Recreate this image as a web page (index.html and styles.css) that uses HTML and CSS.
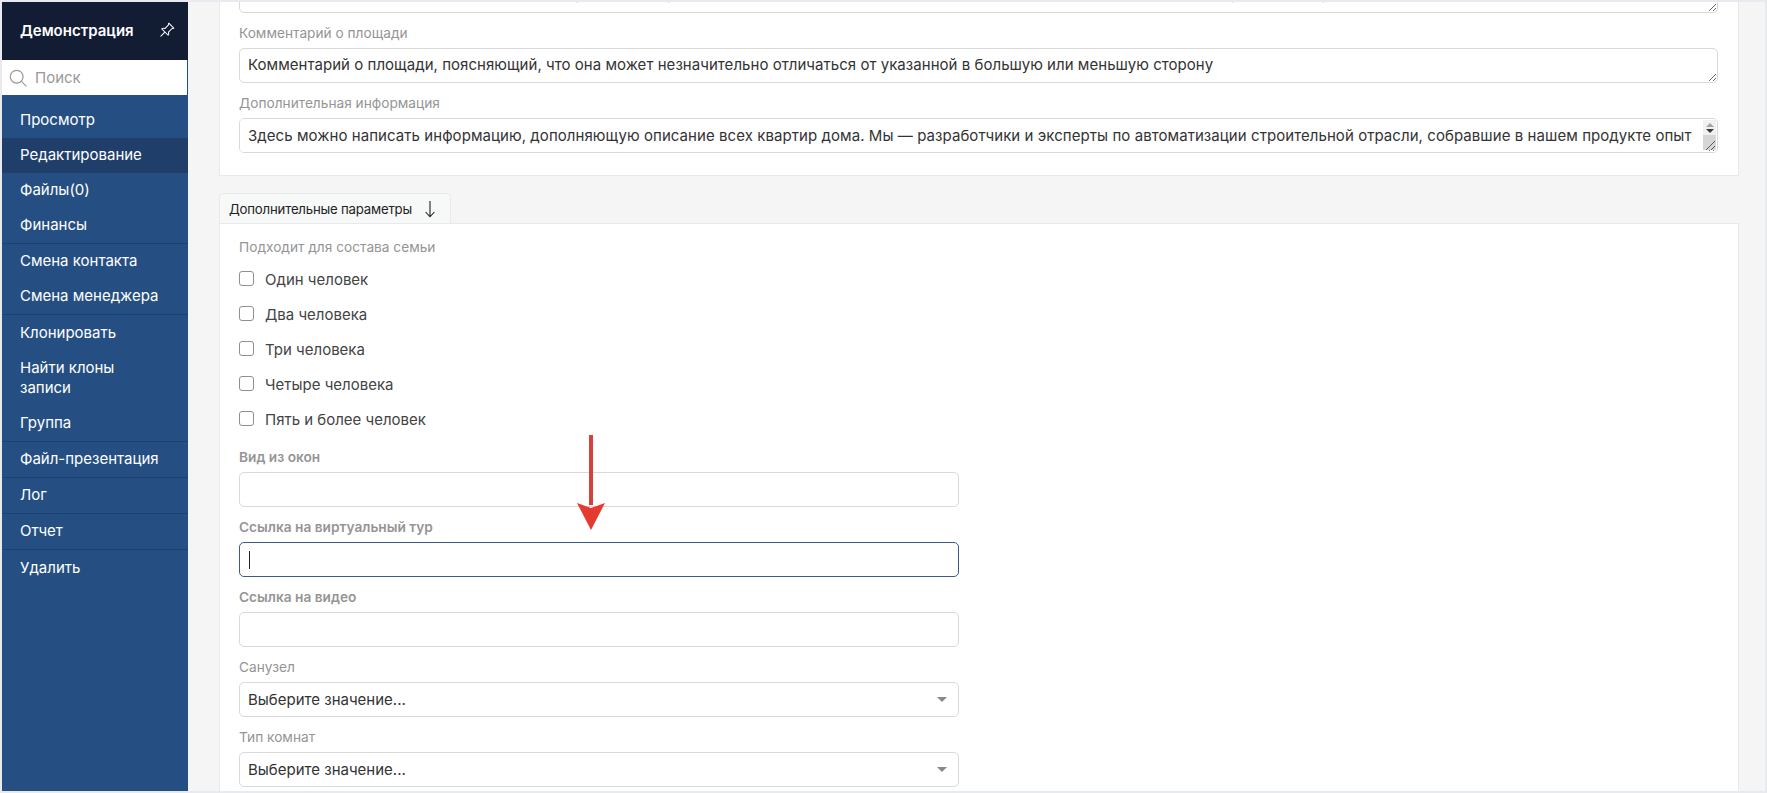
FILE: index.html
```html
<!DOCTYPE html>
<html lang="ru">
<head>
<meta charset="utf-8">
<title>Редактирование</title>
<link rel="stylesheet" href="styles.css">
</head>
<body>
<div class="app">
  <aside class="sidebar">
    <div class="brand">
      <span>Демонстрация</span>
      <svg class="pin" viewBox="0 0 16 16" width="16" height="16" fill="#fff"><path d="M9.828.722a.5.5 0 0 1 .354.146l4.95 4.95a.5.5 0 0 1 0 .707c-.48.48-1.072.588-1.503.588-.177 0-.335-.018-.46-.039l-3.134 3.134a5.927 5.927 0 0 1 .16 1.013c.046.702-.032 1.687-.72 2.375a.5.5 0 0 1-.707 0l-2.829-2.828-3.182 3.182c-.195.195-1.219.902-1.414.707-.195-.195.512-1.22.707-1.414l3.182-3.182-2.828-2.829a.5.5 0 0 1 0-.707c.688-.688 1.673-.767 2.375-.72a5.922 5.922 0 0 1 1.013.16l3.134-3.133a2.772 2.772 0 0 1-.04-.461c0-.43.108-1.022.589-1.503a.5.5 0 0 1 .353-.146zm.122 2.112v-.002.002zm0-.002v.002a.5.5 0 0 1-.122.51L6.293 6.878a.5.5 0 0 1-.511.12H5.78l-.014-.004a4.507 4.507 0 0 0-.288-.076 4.922 4.922 0 0 0-.765-.116c-.422-.028-.836.008-1.175.15l5.51 5.509c.141-.34.177-.753.149-1.175a4.924 4.924 0 0 0-.192-1.054l-.004-.013v-.001a.5.5 0 0 1 .12-.512l3.536-3.535a.5.5 0 0 1 .532-.115l.096.022c.087.017.208.034.344.034.114 0 .23-.011.343-.04L9.927 2.028c-.029.113-.04.23-.04.343a1.779 1.779 0 0 0 .062.46z"/></svg>
    </div>
    <div class="search">
      <svg viewBox="0 0 18 18" width="18" height="18" fill="none" stroke="#9a9a9a" stroke-width="1.2"><circle cx="7.7" cy="7.7" r="6.4"/><path d="M12.4 12.4l5 5"/></svg>
      <span>Поиск</span>
    </div>
    <nav class="nav">
      <a class="item">Просмотр</a>
      <a class="item active">Редактирование</a>
      <a class="item">Файлы(0)</a>
      <a class="item sep">Финансы</a>
      <a class="item">Смена контакта</a>
      <a class="item sep">Смена менеджера</a>
      <a class="item loose">Клонировать</a>
      <a class="item">Найти клоны записи</a>
      <a class="item sep">Группа</a>
      <a class="item sep">Файл-презентация</a>
      <a class="item sep">Лог</a>
      <a class="item sep">Отчет</a>
      <a class="item loose">Удалить</a>
    </nav>
  </aside>
  <main class="main">
    <section class="card card-top">
      <textarea class="area area-cut" readonly>Комментарий о цене, поясняющий, что она указана без учета отделки, и может незначительно меняться, а также дополнительные условия покупки квартиры</textarea>
      <div class="field">
        <label class="label">Комментарий о площади</label>
        <textarea class="area" readonly>Комментарий о площади, поясняющий, что она может незначительно отличаться от указанной в большую или меньшую сторону</textarea>
      </div>
      <div class="field">
        <label class="label">Дополнительная информация</label>
        <div class="scroll-wrap">
          <textarea class="area area-long" readonly>Здесь можно написать информацию, дополняющую описание всех квартир дома. Мы — разработчики и эксперты по автоматизации строительной отрасли, собравшие в нашем продукте опыт</textarea>
          <div class="scrollbar">
            <i class="sb-up"></i>
            <i class="sb-down"></i>
            <div class="sb-corner">
              <svg viewBox="0 0 13 15" width="13" height="15" fill="none" stroke="#5a5a5a" stroke-width="1"><path d="M3 15L12 6M8 15l4-4"/></svg>
            </div>
          </div>
        </div>
      </div>
    </section>
    <button class="toggle" type="button">
      <span>Дополнительные параметры</span>
      <svg viewBox="0 0 12 20" width="12" height="20" fill="none" stroke="#222" stroke-width="1.1"><path d="M6 2v15.5M1.6 13L6 17.8 10.4 13"/></svg>
    </button>
    <section class="card card-bottom">
      <label class="label">Подходит для состава семьи</label>
      <div class="checks">
        <label class="check"><input type="checkbox"><span>Один человек</span></label>
        <label class="check"><input type="checkbox"><span>Два человека</span></label>
        <label class="check"><input type="checkbox"><span>Три человека</span></label>
        <label class="check"><input type="checkbox"><span>Четыре человека</span></label>
        <label class="check"><input type="checkbox"><span>Пять и более человек</span></label>
      </div>
      <div class="field narrow">
        <label class="label strong">Вид из окон</label>
        <div class="control"></div>
      </div>
      <div class="field narrow">
        <label class="label strong">Ссылка на виртуальный тур</label>
        <div class="control focus"><span class="caret"></span></div>
      </div>
      <div class="field narrow">
        <label class="label strong">Ссылка на видео</label>
        <div class="control"></div>
      </div>
      <div class="field narrow">
        <label class="label">Санузел</label>
        <div class="control select"><span>Выберите значение...</span><i class="tri"></i></div>
      </div>
      <div class="field narrow">
        <label class="label">Тип комнат</label>
        <div class="control select"><span>Выберите значение...</span><i class="tri"></i></div>
      </div>
    </section>
  </main>
</div>
<svg class="annot" viewBox="0 0 28 95" width="28" height="95"><path d="M12 0h4v70h-4z" fill="#d4403a"/><path d="M0 68l14 5 14-5-14 27z" fill="#e53a2f"/></svg>
</body>
</html>
```
FILE: styles.css
```css
* { box-sizing: border-box; }
html, body { margin: 0; height: 100%; overflow: hidden; }
body {
  background: #e9eaf0;
  padding: 2px;
  font-family: Inter, "Noto Sans", sans-serif;
  font-size: 15px;
  color: #333;
}
.app { display: flex; height: 100%; overflow: hidden; background: #f5f5f6; }

.sidebar { width: 186px; flex: none; background: #254f82; color: #fff; }
.brand {
  height: 58px;
  background: #121c33;
  display: flex;
  align-items: center;
  justify-content: space-between;
  padding: 0 13px 2px 18px;
  font-size: 15px;
  font-weight: 600;
}
.search {
  height: 35px;
  background: #fff;
  border-right: 1px solid #254f82;
  display: flex;
  align-items: center;
  gap: 8px;
  padding-left: 7px;
  color: #999;
  font-size: 15px;
}
.nav { padding-top: 8px; }
.item {
  display: block;
  padding: 7px 24px 8px 18px;
  line-height: 20px;
  font-size: 15px;
  font-weight: 400;
  color: #fff;
}
.item.active { background: #1f3f6a; }
.item.sep { border-bottom: 1px solid #1d4272; }
.item.loose { padding-top: 8px; }

.main { flex: 1; min-width: 0; padding: 0 26px 0 31px; overflow: hidden; }
.card { background: #fff; border: 1px solid #e8e9ea; padding: 0 20px 0 19px; }
.card-top { border-top: 0; padding-bottom: 22px; }
.card-bottom { padding-top: 13px; padding-bottom: 10px; }
.area {
  display: block;
  width: 100%;
  height: 35px;
  border: 1px solid #d9d9d9;
  border-radius: 5px;
  padding: 5px 8px;
  font: 15px/22.5px Inter, "Noto Sans", sans-serif;
  letter-spacing: 0.04px;
  color: #333;
  background: #fff;
  outline: none;
}
.area-cut { margin-top: -24px; padding-top: 3.5px; }
.area-long { letter-spacing: 0.065px; padding-top: 6px; }
.scroll-wrap { position: relative; }
.scrollbar {
  position: absolute;
  top: 2px;
  right: 2px;
  bottom: 3px;
  width: 13px;
  background: #f1f1f1;
  display: flex;
  flex-direction: column;
  align-items: center;
  padding-top: 3px;
}
.sb-up, .sb-down { display: block; width: 0; height: 0; border-left: 4px solid transparent; border-right: 4px solid transparent; }
.sb-up { border-bottom: 4px solid #a3a3a3; }
.sb-down { border-top: 4px solid #3a3a3a; margin-top: 2px; }
.sb-corner { margin-top: auto; width: 100%; height: 15px; background: #d6d6d6; }
.sb-corner svg { display: block; }

.field { margin-top: 10px; }
.label { display: block; line-height: 20px; font-size: 13.7px; color: #959595; margin-bottom: 5px; }
.card-bottom > .label { margin-bottom: 0; }
.label.strong { font-weight: 600; }

.toggle {
  display: flex;
  align-items: center;
  gap: 12px;
  width: 232px;
  height: 30px;
  margin: 17px 0 0;
  padding: 0 0 0 9px;
  border: 1px solid #e8e9ea;
  border-bottom: 0;
  border-radius: 5px 5px 0 0;
  background: #f7f8f8;
  font: 400 13.2px Inter, "Noto Sans", sans-serif;
  letter-spacing: -0.2px;
  color: #222;
}

.checks { margin: 4px 0 11px; }
.check { display: flex; align-items: center; gap: 11px; height: 35px; font-size: 15px; color: #444; }
.check span { padding-top: 2px; }
.check input {
  appearance: none;
  width: 15px;
  height: 15px;
  margin: 0;
  border: 1.5px solid #8f8f8f;
  border-radius: 3px;
  background: #fff;
}

.narrow { width: 720px; }
.control {
  height: 35px;
  border: 1px solid #d9d9d9;
  border-radius: 5px;
  background: #fff;
  display: flex;
  align-items: center;
  padding: 0 8px;
}
.control.focus { border-color: #3a5a8c; }
.caret { display: block; width: 1px; height: 18px; background: #222; margin-left: 1px; }
.select { justify-content: space-between; font-size: 15px; color: #333; padding-right: 11px; }
.tri {
  display: block;
  width: 0;
  height: 0;
  border-left: 5px solid transparent;
  border-right: 5px solid transparent;
  border-top: 5px solid #888;
}

.annot { position: absolute; left: 577px; top: 435px; }
```
